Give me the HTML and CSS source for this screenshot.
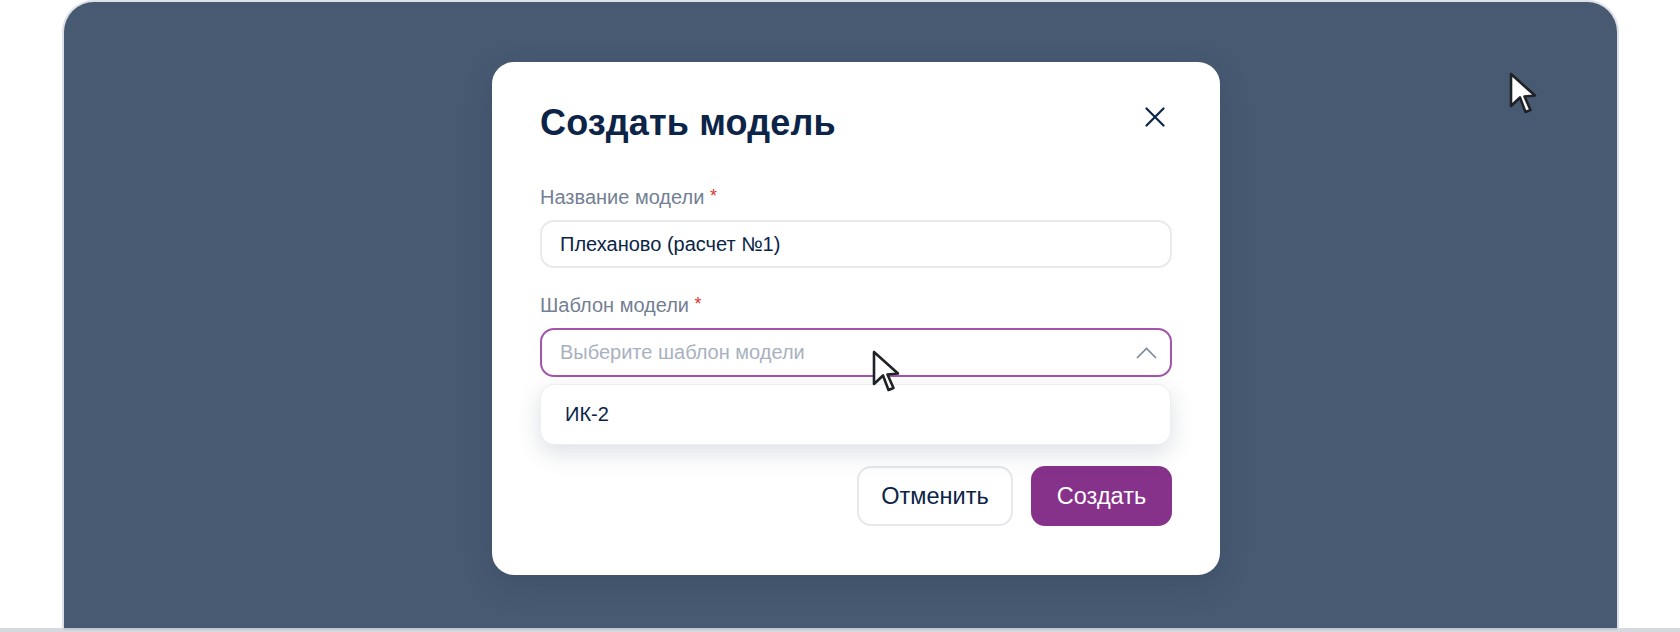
FILE: index.html
```html
<!DOCTYPE html>
<html lang="ru">
<head>
<meta charset="utf-8">
<title>Создать модель</title>
<link rel="stylesheet" href="styles.css">
</head>
<body>
<div class="shell">
  <main class="frame">
    <section class="modal">
      <header class="modal-head">
        <h1 class="modal-title">Создать модель</h1>
        <button class="close" type="button" aria-label="Закрыть">
          <svg width="20" height="20" viewBox="0 0 20 20" fill="none"><path d="M1.5 1.500 18.500 18.500M18.500 1.500 1.500 18.500" stroke="#0b2447" stroke-width="2.200" stroke-linecap="round"/></svg>
        </button>
      </header>
      <div class="field field-name">
        <div class="label">Название модели <span class="req">*</span></div>
        <div class="control">Плеханово (расчет №1)</div>
      </div>
      <div class="field field-template">
        <div class="label">Шаблон модели <span class="req">*</span></div>
        <div class="control control-open">
          <span class="placeholder">Выберите шаблон модели</span>
          <svg width="21" height="12" viewBox="0 0 21 12" fill="none"><path d="M1 11 10.500 1.500 20 11" stroke="#7d8a9c" stroke-width="1.700"/></svg>
        </div>
        <div class="menu"><div class="menu-item">ИК-2</div></div>
      </div>
      <footer class="actions">
        <button class="btn btn-ghost" type="button">Отменить</button>
        <button class="btn btn-primary" type="button">Создать</button>
      </footer>
    </section>
  </main>
  <svg class="cursor cursor-outer" width="28" height="44" viewBox="0 0 28 44"><path d="M2 2V34L11 25.500 16.500 40 21.500 38 15.500 24.500 26 23.500Z" fill="#fff" stroke="#1f2226" stroke-width="2.600" stroke-linejoin="round"/></svg>
  <svg class="cursor cursor-inner" width="28" height="44" viewBox="0 0 28 44"><path d="M2 2V34L11 25.500 16.500 40 21.500 38 15.500 24.500 26 23.500Z" fill="#fff" stroke="#1f2226" stroke-width="2.600" stroke-linejoin="round"/></svg>
</div>
</body>
</html>
```
FILE: styles.css
```css
* { box-sizing: border-box; }
html, body { margin: 0; padding: 0; }
body {
  width: 1680px;
  height: 632px;
  overflow: hidden;
  font-family: "Liberation Sans", Arial, sans-serif;
  color: #0b2447;
  background: #fff;
}
.shell {
  position: relative;
  height: 632px;
  padding: 0 61px 2px 62px;
  background: linear-gradient(to bottom, #fff 628px, #d6d8e0 628px);
}
.frame {
  height: 630px;
  padding-top: 60px;
  display: flex;
  justify-content: center;
  align-items: flex-start;
  background: #475a72;
  border: 2px solid #dde0e6;
  border-bottom-color: #c3c9d3;
  border-radius: 32px 32px 0 0;
}
.modal {
  width: 728px;
  height: 513px;
  margin-left: 31px;
  padding: 37px 48px 0;
  background: #fff;
  border-radius: 22px;
  box-shadow: 0 10px 30px rgba(30, 40, 60, 0.18);
}
.modal-head {
  display: flex;
  justify-content: space-between;
  align-items: center;
  height: 48px;
}
.modal-title {
  margin: 0;
  font-size: 36px;
  line-height: 48px;
  font-weight: 700;
  letter-spacing: 0.15px;
}
.close {
  display: flex;
  padding: 0;
  margin: 0 7px 13px 0;
  border: 0;
  background: none;
}
.field-name { margin-top: 37px; }
.field-template { margin-top: 24px; position: relative; }
.label {
  height: 24px;
  font-size: 20px;
  line-height: 24px;
  color: #737f93;
}
.req { color: #e0342c; font-size: 18px; vertical-align: 2px; }
.control {
  display: flex;
  align-items: center;
  justify-content: space-between;
  height: 48px;
  margin-top: 12px;
  padding: 0 18px;
  font-size: 20px;
  background: #fff;
  border: 2px solid #e8eaed;
  border-radius: 14px;
}
.control-open {
  height: 49px;
  padding-right: 13px;
  border-color: #a255ab;
}
.placeholder { color: #a9b1bf; }
.menu {
  position: absolute;
  top: 92px;
  left: 0;
  right: 1px;
  height: 61px;
  padding: 0 24px;
  display: flex;
  align-items: center;
  background: #fff;
  border: 1px solid #eceef0;
  border-radius: 14px;
  box-shadow: 0 8px 24px rgba(40, 55, 80, 0.16);
}
.menu-item { font-size: 20px; }
.actions {
  display: flex;
  justify-content: flex-end;
  gap: 18px;
  margin-top: 89px;
}
.btn {
  height: 60px;
  border-radius: 14px;
  font-family: inherit;
  font-size: 23.5px;
  padding: 0;
}
.btn-ghost {
  width: 156px;
  background: #fff;
  color: #0b2447;
  border: 2px solid #e6e8eb;
}
.btn-primary {
  width: 141px;
  background: #87328a;
  color: #fff;
  border: 0;
}
.cursor { position: absolute; }
.cursor-outer { left: 1509px; top: 72px; }
.cursor-inner { left: 872px; top: 350px; }
```
